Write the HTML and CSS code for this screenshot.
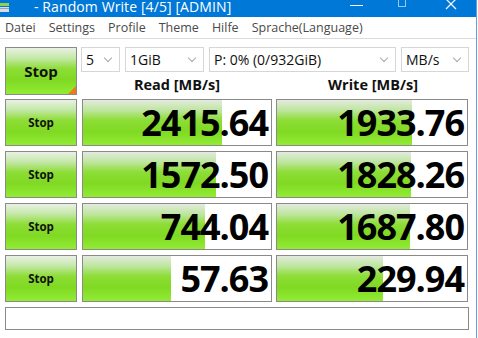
FILE: index.html
```html
<!DOCTYPE html>
<html lang="en">
<head>
  <meta charset="UTF-8">
  <title>Random Write [4/5] [ADMIN]</title>
  <link rel="stylesheet" href="styles.css">
</head>
<body>
  <div class="window">
    <div class="titlebar">
      <svg class="app-icon" width="9" height="12" viewBox="0 0 9 12">
        <rect x="0" y="2" width="9" height="3" fill="#8fd14f"/>
        <rect x="0" y="6" width="9" height="5" fill="#d8dde3"/>
        <rect x="0" y="7" width="9" height="1" fill="#9aa3ad"/>
      </svg>
      <span class="title">- Random Write [4/5] [ADMIN]</span>
      <div class="controls">
        <svg width="14" height="10" viewBox="0 0 14 10"><line x1="0" y1="5.5" x2="13" y2="5.5" stroke="#fff"/></svg>
        <svg width="10" height="10" viewBox="0 0 10 10"><rect x="1.5" y="-4.5" width="7" height="11" fill="none" stroke="#fff" stroke-opacity=".6"/></svg>
        <svg width="12" height="10" viewBox="0 0 12 10"><path d="M1 -1 L11 9 M11 -1 L1 9" stroke="#fff" stroke-width="1.2"/></svg>
      </div>
    </div>

    <div class="menubar">
      <span>Datei</span>
      <span>Settings</span>
      <span>Profile</span>
      <span>Theme</span>
      <span>Hilfe</span>
      <span>Sprache(Language)</span>
    </div>

    <div class="board">
      <button class="stop stop-all">Stop<i class="corner"></i></button>
      <div class="options">
        <div class="combos">
          <div class="combo c-count">5</div>
          <div class="combo c-size">1GiB</div>
          <div class="combo c-drive">P: 0% (0/932GiB)</div>
          <div class="combo c-unit">MB/s</div>
        </div>
        <div class="heads">
          <div class="head">Read [MB/s]</div>
          <div class="head">Write [MB/s]</div>
        </div>
      </div>

      <button class="stop">Stop</button>
      <div class="meter"><div class="fill" style="width: 73.8%"></div><span>2415.64</span></div>
      <div class="meter"><div class="fill" style="width: 71%"></div><span>1933.76</span></div>

      <button class="stop">Stop</button>
      <div class="meter"><div class="fill" style="width: 70.7%"></div><span>1572.50</span></div>
      <div class="meter"><div class="fill" style="width: 70.7%"></div><span>1828.26</span></div>

      <button class="stop">Stop</button>
      <div class="meter"><div class="fill" style="width: 64.9%"></div><span>744.04</span></div>
      <div class="meter"><div class="fill" style="width: 70%"></div><span>1687.80</span></div>

      <button class="stop">Stop</button>
      <div class="meter"><div class="fill" style="width: 46.6%"></div><span>57.63</span></div>
      <div class="meter"><div class="fill" style="width: 56%"></div><span>229.94</span></div>

      <div class="comment"></div>
    </div>
  </div>
</body>
</html>
```

FILE: styles.css
```css
body {
  margin: 0;
  background-color: #fff;
  font-family: "Open Sans", "Noto Sans", sans-serif;
  overflow: hidden;
}

.window {
  width: 477px;
  height: 338px;
  border-right: 1px solid #5d9ee6;
  box-sizing: border-box;
}

.titlebar {
  display: flex;
  align-items: center;
  height: 17px;
  background-color: #0078d7;
  color: #fff;
}

.app-icon {
  margin-top: -4px;
}

.title {
  margin-left: 25px;
  margin-top: -4px;
  font-size: 14px;
  letter-spacing: 0.1px;
  line-height: 17px;
}

.controls {
  display: flex;
  align-items: flex-start;
  margin-left: auto;
  align-self: flex-start;
}

.controls svg:nth-child(1) {
  margin-right: 33px;
}

.controls svg:nth-child(2) {
  margin-right: 38px;
}

.controls svg:nth-child(3) {
  margin-right: 19px;
}

.menubar {
  display: flex;
  height: 21px;
  padding-left: 5px;
  border-bottom: 1px solid #dadada;
  font-size: 12.5px;
  line-height: 21px;
  color: #4a4a4a;
}

.menubar span {
  margin-right: 13px;
}

.board {
  display: grid;
  grid-template-columns: 72px 191px 192px;
  grid-auto-rows: 47px;
  column-gap: 4px;
  row-gap: 5px;
  padding: 8px 0 0 5px;
}

.board .meter:nth-child(3n+1) {
  margin-left: 1px;
}

.stop {
  display: flex;
  align-items: center;
  justify-content: center;
  margin: 0;
  padding: 0;
  border: 1px solid #8a8a8a;
  background: linear-gradient(#e9f1e4 0%, #c4e8a8 22%, #8ddd36 45%, #80d922 70%, #93ec34 100%);
  font-family: inherit;
  font-size: 11.5px;
  font-weight: bold;
  color: #111;
  cursor: pointer;
}

.stop-all {
  position: relative;
  height: 48px;
  font-size: 15px;
}

.corner {
  position: absolute;
  right: 0;
  bottom: 0;
  width: 0;
  height: 0;
  border-left: 8px solid transparent;
  border-bottom: 8px solid #f07a18;
}

.options {
  grid-column: 2 / 4;
  display: flex;
  flex-direction: column;
  margin-right: -1px;
}

.combos {
  display: flex;
  gap: 5px;
  height: 25px;
}

.combo {
  position: relative;
  box-sizing: border-box;
  height: 25px;
  padding-left: 4px;
  border: 1px solid #d6d6d6;
  font-size: 14px;
  line-height: 23px;
  color: #111;
}

.combo::after {
  content: "";
  position: absolute;
  right: 8px;
  top: 7px;
  width: 5px;
  height: 5px;
  border-right: 1px solid #a8a8a8;
  border-bottom: 1px solid #a8a8a8;
  transform: rotate(45deg);
}

.c-count { width: 39px; }
.c-size { width: 79px; }
.c-drive { width: 187px; }
.c-unit { width: 68px; }

.heads {
  display: flex;
  gap: 4px;
}

.head {
  flex: 1;
  text-align: center;
  font-size: 14.5px;
  font-weight: bold;
  line-height: 26px;
  color: #111;
}

.meter {
  position: relative;
  display: flex;
  align-items: center;
  justify-content: flex-end;
  border: 1px solid #8a8a8a;
  background-color: #fff;
}

.fill {
  position: absolute;
  left: 0;
  top: 0;
  bottom: 0;
  background: linear-gradient(#e3ebde 0%, #bfe6a0 22%, #8ddd36 45%, #80d922 70%, #93ec34 100%);
}

.meter span {
  position: relative;
  padding-right: 3px;
  font-size: 36px;
  font-weight: bold;
  letter-spacing: -1px;
  line-height: 42px;
  color: #000;
}

.comment {
  grid-column: 1 / 4;
  height: 23px;
  margin-right: -1px;
  border: 1px solid #8a8a8a;
  box-sizing: border-box;
  align-self: start;
}
```
